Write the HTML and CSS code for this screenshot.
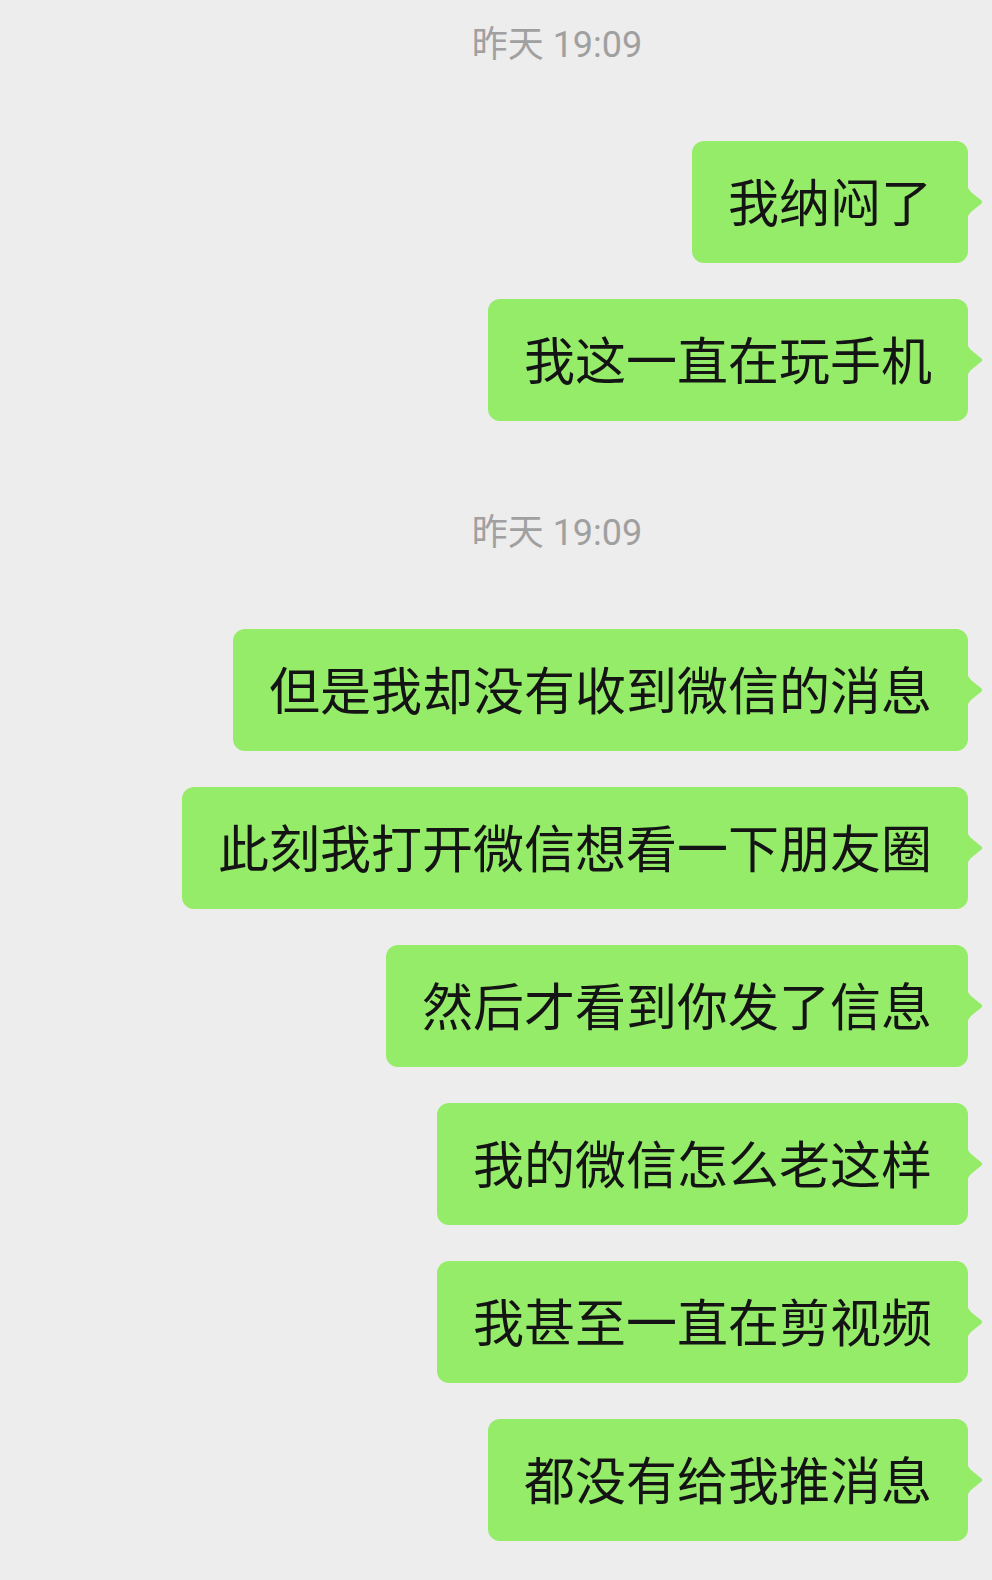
FILE: index.html
```html
<!DOCTYPE html>
<html lang="zh-CN">
<head>
<meta charset="utf-8">
<title>聊天</title>
<link rel="stylesheet" href="styles.css">
</head>
<body>
<div class="chat">
  <div class="time">昨天 19:09</div>
  <div class="row"><div class="bubble">我纳闷了</div></div>
  <div class="row"><div class="bubble">我这一直在玩手机</div></div>
  <div class="time">昨天 19:09</div>
  <div class="row"><div class="bubble">但是我却没有收到微信的消息</div></div>
  <div class="row"><div class="bubble">此刻我打开微信想看一下朋友圈</div></div>
  <div class="row"><div class="bubble">然后才看到你发了信息</div></div>
  <div class="row"><div class="bubble">我的微信怎么老这样</div></div>
  <div class="row"><div class="bubble">我甚至一直在剪视频</div></div>
  <div class="row"><div class="bubble">都没有给我推消息</div></div>
</div>
</body>
</html>
```
FILE: styles.css
```css
html, body {
  margin: 0;
  padding: 0;
  background: #ededed;
}
body {
  width: 992px;
  height: 1580px;
  overflow: hidden;
  font-family: "Noto Sans CJK SC", "Noto Sans", sans-serif;
}
.chat {
  display: flex;
  flex-direction: column;
  padding: 0 24px 0 0;
}
.time {
  margin-top: 90px;
  padding-left: 146px;
  height: 44px;
  line-height: 44px;
  text-align: center;
  font-family: Roboto, "Noto Sans CJK SC", sans-serif;
  font-size: 36px;
  color: #a0a0a0;
}
.time:first-child {
  margin-top: 23px;
}
.row {
  display: flex;
  justify-content: flex-end;
  margin-top: 36px;
}
.time + .row {
  margin-top: 74px;
}
.bubble {
  position: relative;
  background: #95ec69;
  color: #141414;
  font-size: 51px;
  line-height: 70px;
  padding: 24px 36px 28px;
  border-radius: 12px;
  white-space: nowrap;
}
.bubble::after {
  content: "";
  position: absolute;
  right: -15px;
  top: 50%;
  width: 16px;
  height: 34px;
  margin-top: -17px;
  background: #95ec69;
  clip-path: path("M0 0 Q1 4 4 7 L14.5 15.5 Q16 17 14.5 18.5 L4 27 Q1 30 0 34 Z");
}
```
